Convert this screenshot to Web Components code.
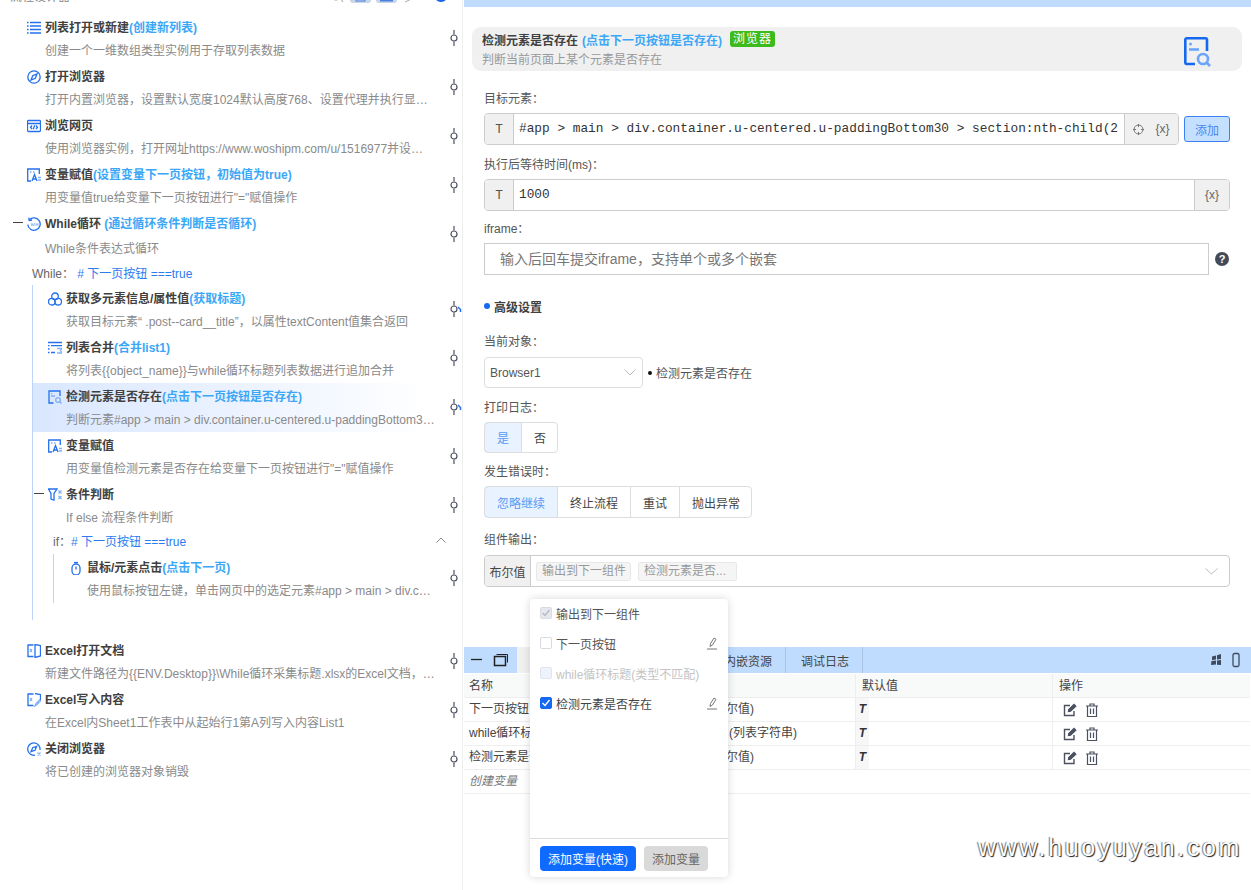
<!DOCTYPE html>
<html lang="zh">
<head>
<meta charset="utf-8">
<title>流程设计器</title>
<style>
    html, body { margin: 0; height: 100%; }
    body { font: 12px "Liberation Sans", "Noto Sans CJK SC", sans-serif; color: #444; background: #fff; overflow: hidden; }
</style>
</head>
<body>
<app-shell>
    <flow-panel slot="left">
        <flow-step icon="list" title="列表打开或新建" note="(创建新列表)" desc="创建一个一维数组类型实例用于存取列表数据"></flow-step>
        <flow-step icon="compass" title="打开浏览器" desc="打开内置浏览器，设置默认宽度1024默认高度768、设置代理并执行显示浏览器窗口操作"></flow-step>
        <flow-step icon="web" title="浏览网页" desc="使用浏览器实例，打开网址https://www.woshipm.com/u/1516977并设置页面加载超时时间"></flow-step>
        <flow-step icon="assign" title="变量赋值" note="(设置变量下一页按钮，初始值为true)" desc="用变量值true给变量下一页按钮进行&quot;=&quot;赋值操作"></flow-step>
        <flow-step icon="loop" fold loose title="While循环" note=" (通过循环条件判断是否循环)" desc="While条件表达式循环"></flow-step>
        <flow-group label="While： " cond="# 下一页按钮 ===true" row="25" style="margin-bottom:17px">
            <flow-step icon="multi" branch title="获取多元素信息/属性值" note="(获取标题)" desc="获取目标元素“ .post--card__title”，以属性textContent值集合返回"></flow-step>
            <flow-step icon="merge" title="列表合并" note="(合并list1)" desc="将列表{{object_name}}与while循环标题列表数据进行追加合并"></flow-step>
            <flow-step icon="detect" branch selected title="检测元素是否存在" note="(点击下一页按钮是否存在)" desc="判断元素#app > main > div.container.u-centered.u-paddingBottom30 > section:nth-child(2)是否存在"></flow-step>
            <flow-step icon="assign" title="变量赋值" desc="用变量值检测元素是否存在给变量下一页按钮进行&quot;=&quot;赋值操作"></flow-step>
            <flow-step icon="cond" fold title="条件判断" desc="If else 流程条件判断"></flow-step>
            <flow-group label="if：" cond="# 下一页按钮 ===true" row="24" chevron>
                <flow-step icon="mouse" title="鼠标/元素点击" note="(点击下一页)" desc="使用鼠标按钮左键，单击网页中的选定元素#app > main > div.container.u-centered.u-paddingBottom30"></flow-step>
            </flow-group>
        </flow-group>
        <flow-step icon="xlsopen" title="Excel打开文档" desc="新建文件路径为{{ENV.Desktop}}\While循环采集标题.xlsx的Excel文档，并保存Excel对象到变量ExcelObject"></flow-step>
        <flow-step icon="xlswrite" title="Excel写入内容" desc="在Excel内Sheet1工作表中从起始行1第A列写入内容List1"></flow-step>
        <flow-step icon="closeweb" title="关闭浏览器" desc="将已创建的浏览器对象销毁"></flow-step>
    </flow-panel>

    <detail-panel slot="right">
        <step-card title="检测元素是否存在" note="(点击下一页按钮是否存在)" tag="浏览器" desc="判断当前页面上某个元素是否存在"></step-card>

        <form-field label="目标元素：" style="margin-top:17px">
            <div style="display:flex;align-items:flex-start;gap:5px">
                <text-group value="#app > main > div.container.u-centered.u-paddingBottom30 > section:nth-child(2)" target style="flex:1;min-width:0"></text-group>
                <add-button>添加</add-button>
            </div>
        </form-field>
        <form-field label="执行后等待时间(ms)：" style="margin-top:9px">
            <text-group value="1000"></text-group>
        </form-field>
        <form-field label="iframe：" style="margin-top:7px">
            <plain-input placeholder="输入后回车提交iframe，支持单个或多个嵌套"></plain-input>
        </form-field>

        <section-title style="margin-top:21px">高级设置</section-title>

        <form-field label="当前对象：" style="margin-top:15px" tight>
            <object-select value="Browser1" hint="检测元素是否存在"></object-select>
        </form-field>
        <form-field label="打印日志：" style="margin-top:9px">
            <seg-buttons items="是,否" h="31"></seg-buttons>
        </form-field>
        <form-field label="发生错误时：" style="margin-top:8px">
            <seg-buttons items="忽略继续,终止流程,重试,抛出异常" h="32"></seg-buttons>
        </form-field>
        <form-field label="组件输出：" style="margin-top:11px" tight>
            <output-group type="布尔值" tags="输出到下一组件,检测元素是否..."></output-group>
        </form-field>

        <var-dock slot="dock">
            <var-row head name="名称" default-value="默认值" ops="操作"></var-row>
            <var-row name="下一页按钮" type="(布尔值)" pad="96"></var-row>
            <var-row name="while循环标题" type="(列表字符串)" pad="115"></var-row>
            <var-row name="检测元素是否存在" type="(布尔值)" pad="96"></var-row>
            <var-row create name="创建变量"></var-row>
        </var-dock>
    </detail-panel>

    <var-popup slot="over">
        <var-option state="locked" label="输出到下一组件"></var-option>
        <var-option state="off" label="下一页按钮" pen></var-option>
        <var-option state="disabled" label="while循环标题(类型不匹配)"></var-option>
        <var-option state="on" label="检测元素是否存在" pen></var-option>
    </var-popup>

    <water-mark slot="over">www.huoyuyan.com</water-mark>
</app-shell>

<script>
"use strict";
const AZUL = "#2470ee";
const ICONOS = {
    list: `<path stroke-width="1.500" d="M0 1.500h1.600M3 1.500h11M0 5h1.600M3 5h11M0 8.500h1.600M3 8.500h11M0 12h1.600M3 12h11"/>`,
    compass: `<circle cx="7" cy="7" r="6.200"/><path d="M10 4 8.300 8.300 4 10 5.700 5.700Z"/>`,
    web: `<rect x=".5" y="1.500" width="13" height="11" rx="1"/><path d="M.5 4.500h13M5 6.500 3.500 8.200 5 10M9 6.500l1.500 1.700L9 10M7.700 6.300 6.300 10.300"/>`,
    assign: `<path d="M4 13H.7V1h11.600v5"/><path d="M3 4h1.500M6 4h1.500" stroke="#7fb0fa"/><path d="M5 13l2.500-6.500L10 13M6 11h3" /><path d="M11 9.500h3M11 12h3" stroke="#7fb0fa"/>`,
    loop: `<path d="M2.300 3A6.200 6.200 0 1 1 .8 7.500"/><path d="M1.800.6 2.200 3.400 5 3"/><path d="M4 6l.8 3 1-2.400 1 2.400.8-3M9 6v3M11 6v3M9 7.500h2" stroke="#8ab6fa" stroke-width=".8"/>`,
    multi: `<circle cx="7" cy="4.300" r="3.300"/><circle cx="3.800" cy="9.700" r="3.300"/><circle cx="10.200" cy="9.700" r="3.300"/>`,
    merge: `<path d="M0 1.500h14M0 4.700h1.500M3 4.700h11M0 8h1.500M0 11.500h1.500M3 11.500h4"/><path d="M9 7.500h5l-1.500 2 1.500 2.500H9" stroke="#7fb0fa"/>`,
    detect: `<path d="M5.500 13H1V1h11v5"/><path d="M3 3.700h1.200M3 6h4" stroke="#7fb0fa"/><circle cx="10" cy="10" r="2.300" stroke="#7fb0fa"/><path d="M11.800 11.800 13.500 13.500" stroke="#7fb0fa"/>`,
    cond: `<path d="M.5 1h8.500L6 5.500V12l-3-1V5.500Z"/><path d="M10.500 2.500l3 3M13.500 2.500l-3 3M10.500 8l3 3M13.500 8l-3 3" stroke="#7fb0fa"/>`,
    mouse: `<rect x="3" y="3" width="8" height="11" rx="4"/><path d="M7 5.500v3"/><path d="M5 1.500h4"/>`,
    xlsopen: `<path d="M6.500 1H1v11.500h5.500M8 .5l5.500 1V12L8 13.500Z"/><path d="M3 5l2 3M5 5 3 8" stroke="#7fb0fa"/>`,
    xlswrite: `<path d="M6.500 1H1v11.500h5.500M8 .5l5.500 1V7"/><path d="M3 5l2 3M5 5 3 8" stroke="#7fb0fa"/><path d="M8 13l1-2.500L12.500 7l1 1-3.500 3.500Z" stroke="#7fb0fa"/>`,
    closeweb: `<path d="M13 8A6.200 6.200 0 1 0 8 13.200"/><path d="M9.700 4.300 8 8.300 4 9.700 5.700 5.700Z"/><path d="M10.500 10.500l3 3M13.500 10.500l-3 3" stroke="#7fb0fa"/>`
};

class AppShell extends HTMLElement {
    constructor() {
        super();
        this.shadow = this.attachShadow({ mode: "open" });
        this.shadow.innerHTML = `
        <style>
            :host { display: grid; grid-template-columns: 463px 1fr; width: 1251px; height: 890px; position: relative; overflow: hidden; }
        </style>
        <slot name="left"></slot>
        <slot name="right"></slot>
        <slot name="over"></slot>`;
    }
}

class FlowPanel extends HTMLElement {
    constructor() {
        super();
        this.shadow = this.attachShadow({ mode: "open" });
        this.shadow.innerHTML = `
        <style>
            :host { display: block; height: 890px; overflow: hidden; border-right: 1px solid #eee; box-sizing: border-box; }
            #tope { height: 14px; display: flow-root; }
            #barra { height: 16px; margin-top: -11px; padding: 0 14px 0 10px; display: flex; align-items: center; color: #888; line-height: 16px; }
            #barra span { flex: 1; }
            #barra svg { flex: none; display: block; align-self: flex-start; margin-top: -2px; }
            #pasos { padding-left: 12px; }
        </style>
        <div id="tope"><div id="barra">
            <span>流程设计器</span>
            <svg width="118" height="16" viewBox="0 0 118 16" fill="none">
                <circle cx="6" cy="7" r="6" stroke="#999"/><path d="M10 11l3 4" stroke="#999"/>
                <rect x="20" y="0" width="21" height="16" rx="3" fill="#c9d6e6"/><rect x="26" y="2" width="9" height="12" fill="none" stroke="#4a7fe0"/>
                <rect x="46" y="0" width="21" height="16" rx="3" fill="#c9d6e6"/><path d="M50 13h13" stroke="#4a7fe0" stroke-width="3"/>
                <path d="M75 15 88 9M77 4h9v8" stroke="#aaa"/>
                <circle cx="111" cy="8" r="7" fill="#1763f0"/>
            </svg>
        </div></div>
        <div id="pasos"><slot></slot></div>`;
    }
}

class FlowStep extends HTMLElement {
    constructor() {
        super();
        this.shadow = this.attachShadow({ mode: "open" });
    }
    connectedCallback() {
        const icon = ICONOS[this.getAttribute("icon")] || "";
        const title = this.getAttribute("title") || "";
        this.removeAttribute("title");
        const note = this.getAttribute("note");
        const desc = this.getAttribute("desc") || "";
        const sel = this.hasAttribute("selected");
        this.shadow.innerHTML = `
        <style>
            :host { display: flex; height: 49px; position: relative; box-sizing: border-box; padding-top: 2px; }
            :host([loose]) { height: 50px; }
            :host([loose]) #desc { line-height: 26px; height: 24px; }
            #fondo { flex: 1; min-width: 0; padding: 0 11px 0 15px; ${sel ? "background: linear-gradient(90deg,#d9e7ff,#eef4ff 55%,#fff 96%);margin-top:-2px;padding-top:2px;" : ""} }
            #fila { display: flex; align-items: center; height: 24px; line-height: 24px; white-space: pre; }
            #fila svg { flex: none; width: 14px; height: 14px; margin-right: 4px; fill: none; stroke: ${AZUL}; stroke-width: 1.300; }
            b { font-weight: 700; color: #404040; }
            i { font-style: normal; font-weight: 700; color: #3ba7f6; }
            #desc { height: 23px; line-height: 23px; padding-left: 18px; color: #8a8a8a; white-space: nowrap; overflow: hidden; text-overflow: ellipsis; }
            #pin { flex: none; width: 16px; display: flex; align-items: center; justify-content: flex-end; margin-top: -4px; }
            #menos { position: absolute; left: 1px; top: 12px; width: 10px; height: 1px; background: #444; }
        </style>
        ${this.hasAttribute("fold") ? `<div id="menos"></div>` : ""}
        <div id="fondo">
            <div id="fila"><svg viewBox="0 0 14 14">${icon}</svg><b>${title}</b>${note ? `<i>${note}</i>` : ""}</div>
            <div id="desc"></div>
        </div>
        <div id="pin"><svg width="12" height="16" viewBox="0 0 12 16" fill="none" stroke="#4b5060" stroke-width="1.200">
            <path d="M4 0v4.500M4 11.500V16"/><circle cx="4" cy="8" r="3"/>
            ${this.hasAttribute("branch") ? `<path d="M8 6l2.500 2.500V11" stroke="#2470ee" stroke-width="1.500"/>` : ""}
        </svg></div>`;
        this.shadow.getElementById("desc").textContent = desc;
    }
}

class FlowGroup extends HTMLElement {
    constructor() {
        super();
        this.shadow = this.attachShadow({ mode: "open" });
    }
    connectedCallback() {
        const row = this.getAttribute("row") || 24;
        this.shadow.innerHTML = `
        <style>
            :host { display: block; margin-left: 20px; }
            #cab { height: ${row}px; box-sizing: border-box; display: flex; align-items: center; white-space: pre; color: #666; padding-right: 16px; }
            #cab em { font-style: normal; color: #2c7cf0; flex: 1; }
            #cuerpo { border-left: 1px solid #bcd3fb; }
            :host([row="25"]) #cuerpo { padding-bottom: 17px; }
            :host([row="24"]) #cab { padding-bottom: 4px; }
        </style>
        <div id="cab"><span>${this.getAttribute("label")}</span><em>${this.getAttribute("cond")}</em>
        ${this.hasAttribute("chevron") ? `<svg width="10" height="6" viewBox="0 0 10 6" fill="none" stroke="#888"><path d="M.5 5.500 5 1l4.500 4.500"/></svg>` : ""}</div>
        <div id="cuerpo"><slot></slot></div>`;
    }
}

class DetailPanel extends HTMLElement {
    constructor() {
        super();
        this.shadow = this.attachShadow({ mode: "open" });
        this.shadow.innerHTML = `
        <style>
            :host { display: flex; flex-direction: column; height: 890px; padding-left: 1px; box-sizing: border-box; min-width: 0; }
            #tope { height: 7px; background: #bfdcff; flex: none; }
            #forma { flex: 1; min-height: 0; padding: 0 21px 0 20px; }
            #dock { flex: none; height: 243px; }
        </style>
        <div id="tope"></div>
        <div id="forma"><slot></slot></div>
        <div id="dock"><slot name="dock"></slot></div>`;
    }
}

class StepCard extends HTMLElement {
    constructor() {
        super();
        this.shadow = this.attachShadow({ mode: "open" });
    }
    connectedCallback() {
        const title = this.getAttribute("title");
        this.removeAttribute("title");
        this.shadow.innerHTML = `
        <style>
            :host { display: flex; align-items: center; height: 44px; margin: 20px -12px 0 -12px; padding: 0 30px 0 10px; background: #f0f0f0; border-radius: 9px; }
            #txt { flex: 1; }
            #uno { display: flex; align-items: center; height: 20px; }
            b { color: #404040; }
            i { font-style: normal; font-weight: 700; color: #3ba7f6; margin-left: 4px; }
            span { margin-left: 8px; background: #3dba1c; color: #fff; padding: 0 3px; height: 16px; line-height: 16px; border-radius: 3px; letter-spacing: 1px; }
            p { margin: 2px 0 0; color: #999; line-height: 18px; }
            svg { flex: none; margin-top: 6px; }
        </style>
        <div id="txt">
            <div id="uno"><b>${title}</b><i>${this.getAttribute("note")}</i><span>${this.getAttribute("tag")}</span></div>
            <p>${this.getAttribute("desc")}</p>
        </div>
        <svg width="28" height="30" viewBox="0 0 28 30" fill="none" stroke-width="2.600">
            <path d="M11 27H2.500A1.500 1.500 0 0 1 1.300 25.500V2.500A1.500 1.500 0 0 1 2.500 1.300h19A1.500 1.500 0 0 1 23 2.500V14" stroke="#1668f0"/>
            <circle cx="6.500" cy="7" r="1.500" fill="#6aa5fb" stroke="none"/>
            <path d="M5 12.500h10" stroke="#6aa5fb"/>
            <circle cx="19" cy="22" r="5" stroke="#6aa5fb"/><path d="M23 26l3 3" stroke="#6aa5fb"/>
        </svg>`;
    }
}

class FormField extends HTMLElement {
    constructor() {
        super();
        this.shadow = this.attachShadow({ mode: "open" });
    }
    connectedCallback() {
        this.shadow.innerHTML = `
        <style>
            :host { display: block; }
            #lab { height: 20px; line-height: 22px; color: #555; margin-bottom: ${this.hasAttribute("tight") ? 6 : 5}px; }
        </style>
        <div id="lab">${this.getAttribute("label")}</div>
        <slot></slot>`;
    }
}

class TextGroup extends HTMLElement {
    constructor() {
        super();
        this.shadow = this.attachShadow({ mode: "open" });
    }
    connectedCallback() {
        const target = this.hasAttribute("target");
        this.shadow.innerHTML = `
        <style>
            :host { display: flex; height: 32px; border: 1px solid #ccc; border-radius: 4px; box-sizing: border-box; overflow: hidden; align-items: stretch; }
            #t { flex: none; width: 28px; background: #f0f0f0; border-right: 1px solid #ccc; display: flex; align-items: center; justify-content: center; color: #555; font: 12.800px "Liberation Mono", monospace; }
            #v { flex: 1; min-width: 0; margin: 0 5px; white-space: nowrap; overflow: hidden; font: 12.800px/30px "Liberation Mono", monospace; color: #333; }
            #s { flex: none; width: ${target ? 53 : 34}px; background: #f0f0f0; border-left: 1px solid #ccc; display: flex; align-items: center; justify-content: center; gap: 11px; color: #666; font-size: 12px; }
            svg { display: block; }
        </style>
        <div id="t">T</div>
        <div id="v"></div>
        <div id="s">
            ${target ? `<svg width="11" height="11" viewBox="0 0 11 11" fill="none" stroke="#777"><circle cx="5.500" cy="5.500" r="4.500"/><path d="M5.500 0v3M5.500 8v3M0 5.500h3M8 5.500h3"/></svg>` : ""}
            <span>{x}</span>
        </div>`;
        this.shadow.getElementById("v").textContent = this.getAttribute("value");
    }
}

class AddButton extends HTMLElement {
    constructor() {
        super();
        this.shadow = this.attachShadow({ mode: "open" });
        this.shadow.innerHTML = `
        <style>
            :host { display: flex; flex: none; align-items: center; justify-content: center; box-sizing: border-box; width: 46px; height: 26px; margin-top: 3px; background: #c5e0ff; border: 1px solid #3b82f6; border-radius: 3px; color: #4d86ee; }
        </style>
        <slot></slot>`;
    }
}

class PlainInput extends HTMLElement {
    constructor() {
        super();
        this.shadow = this.attachShadow({ mode: "open" });
    }
    connectedCallback() {
        this.shadow.innerHTML = `
        <style>
            :host { display: flex; align-items: center; }
            #c { flex: none; box-sizing: border-box; width: 725px; height: 32px; border: 1px solid #ccc; padding-left: 15px; line-height: 30px; font-size: 14px; color: #777; }
            #q { flex: none; width: 14px; height: 14px; margin-left: 6px; border-radius: 50%; background: #434a58; color: #fff; font-weight: 700; font-size: 11px; line-height: 14px; text-align: center; }
        </style>
        <div id="c">${this.getAttribute("placeholder")}</div>
        <div id="q">?</div>`;
    }
}

class SectionTitle extends HTMLElement {
    constructor() {
        super();
        this.shadow = this.attachShadow({ mode: "open" });
        this.shadow.innerHTML = `
        <style>
            :host { display: flex; align-items: center; gap: 4px; height: 20px; font-weight: 700; color: #404040; }
            i { width: 6px; height: 6px; border-radius: 50%; background: #1668f0; }
        </style>
        <i></i><slot></slot>`;
    }
}

class ObjectSelect extends HTMLElement {
    constructor() {
        super();
        this.shadow = this.attachShadow({ mode: "open" });
    }
    connectedCallback() {
        this.shadow.innerHTML = `
        <style>
            :host { display: flex; align-items: center; height: 31px; color: #555; }
            #c { box-sizing: border-box; width: 159px; height: 31px; border: 1px solid #ddd; border-radius: 4px; padding: 0 6px 0 5px; display: flex; align-items: center; justify-content: space-between; }
            i { width: 4px; height: 4px; border-radius: 50%; background: #111; margin: 0 4px 0 5px; }
        </style>
        <div id="c"><span>${this.getAttribute("value")}</span>
            <svg width="12" height="7" viewBox="0 0 12 7" fill="none" stroke="#bbb"><path d="M.5.500 6 6 11.500.500"/></svg></div>
        <i></i><span>${this.getAttribute("hint")}</span>`;
    }
}

class SegButtons extends HTMLElement {
    constructor() {
        super();
        this.shadow = this.attachShadow({ mode: "open" });
    }
    connectedCallback() {
        const items = this.getAttribute("items").split(",");
        this.shadow.innerHTML = `
        <style>
            :host { display: inline-flex; height: ${this.getAttribute("h")}px; border: 1px solid #ddd; border-radius: 4px; box-sizing: border-box; overflow: hidden; vertical-align: top; }
            span { display: flex; align-items: center; padding: 0 12px; border-left: 1px solid #ddd; color: #444; }
            span:first-of-type { border-left: 0; background: #e9f2ff; color: #5a9bf5; box-shadow: 0 0 0 1px #6aa5fb; }
            span:last-of-type { padding-right: 11px; }
        </style>
        ${items.map(t => `<span>${t}</span>`).join("")}`;
    }
}

class OutputGroup extends HTMLElement {
    constructor() {
        super();
        this.shadow = this.attachShadow({ mode: "open" });
    }
    connectedCallback() {
        const tags = this.getAttribute("tags").split(",");
        this.shadow.innerHTML = `
        <style>
            :host { display: flex; align-items: center; height: 32px; border: 1px solid #ccc; border-radius: 4px; box-sizing: border-box; overflow: hidden; padding-right: 11px; }
            #p { align-self: stretch; width: 45px; flex: none; background: #f0f0f0; border-right: 1px solid #ccc; display: flex; align-items: center; justify-content: center; color: #444; margin-right: 5px; }
            span { height: 19px; line-height: 19px; padding: 0 5px 0 6px; margin: 0 7px 0 0; background: #f5f5f5; box-shadow: inset 0 0 0 1px #e8e8e8; border-radius: 3px; color: #999; }
            span:last-of-type { padding-right: 11px; }
            svg { margin-left: auto; }
        </style>
        <div id="p">${this.getAttribute("type")}</div>
        ${tags.map(t => `<span>${t}</span>`).join("")}
        <svg width="13" height="7" viewBox="0 0 13 7" fill="none" stroke="#bbb"><path d="M.5.500 6.500 6l6-5.500"/></svg>`;
    }
}

class VarDock extends HTMLElement {
    constructor() {
        super();
        this.shadow = this.attachShadow({ mode: "open" });
        this.shadow.innerHTML = `
        <style>
            :host { display: block; height: 243px; }
            #bar { height: 26px; background: #bfdcff; display: flex; align-items: center; color: #444; }
            #ctl { width: 53px; flex: none; display: block; }
            #tabvacio { width: 192px; align-self: stretch; background: #f0f0f0; flex: none; }
            .tab { align-self: stretch; display: flex; align-items: center; padding: 0 13px 0 15px; border-right: 1px solid #a9c4e6; }
            #der { margin-left: auto; margin-right: 8px; display: block; }
            #tabla { margin-top: 1px; width: 786px; }
        </style>
        <div id="bar">
            <svg id="ctl" height="26" viewBox="0 0 53 26" fill="none" stroke="#222">
                <path d="M7 12.500h11" stroke-width="1.300"/>
                <rect x="30.500" y="9.500" width="11" height="9" stroke-width="1.500"/><path d="M32.500 7.500h11v8" />
            </svg>
            <div id="tabvacio"></div>
            <div class="tab">内嵌资源</div>
            <div class="tab">调试日志</div>
            <svg id="der" width="34" height="16" viewBox="0 0 34 16">
                <path d="M3 4.500 7 3.500v4L3 8ZM8 3.300 12 2v5l-4 .5ZM2.500 9 7 8.500v4L2 13ZM8 8.500l4-.5v5L8 12.800Z" fill="#3e4a5c"/>
                <rect x="24" y="1.500" width="6" height="13" rx="1.500" fill="none" stroke="#3e4a5c" stroke-width="1.300"/>
            </svg>
        </div>
        <div id="tabla"><slot></slot></div>`;
    }
}

class VarRow extends HTMLElement {
    constructor() {
        super();
        this.shadow = this.attachShadow({ mode: "open" });
    }
    connectedCallback() {
        const head = this.hasAttribute("head");
        const create = this.hasAttribute("create");
        const pad = this.getAttribute("pad") || 0;
        let resto;
        if (head) {
            resto = `<div></div><div class="c">${this.getAttribute("default-value")}</div><div class="c">${this.getAttribute("ops")}</div>`;
        } else if (create) {
            resto = "";
        } else {
            resto = `<div style="padding-left:${pad}px">${this.getAttribute("type")}</div>
            <div class="c d"><u>T</u></div>
            <div class="c o">
                <svg width="14" height="14" viewBox="0 0 14 14" fill="none" stroke="#4b5060" stroke-width="1.400"><path d="M11 8v4.500H1.500V2.500H7"/><path d="M5.500 8.500 5.800 6.500 11 1.500l1.700 1.700L7.500 8.200Z" fill="#4b5060"/></svg>
                <svg width="14" height="14" viewBox="0 0 14 14" fill="none" stroke="#4b5060" stroke-width="1.200"><path d="M1 3h12M5 3V1h4v2M2.500 3v10.500h9V3M5.500 5.500v5.500M8.500 5.500v5.500"/></svg>
            </div>`;
        }
        this.shadow.innerHTML = `
        <style>
            :host { display: grid; grid-template-columns: 150px 241px 197px 198px; height: 24px; box-sizing: border-box; border-bottom: 1px solid #eee; line-height: ${head ? 25 : 23}px; color: #444; ${head ? "background:#f8f9f9;" : ""} }
            #n { padding-left: 5px; white-space: nowrap; overflow: hidden; ${create ? "font-style:italic;color:#777;" : ""} }
            .c { border-left: 1px solid #eee; padding-left: 6px; }
            .d { padding: 0; }
            .d u { display: block; width: 13px; height: 23px; background: #f7f7f7; text-align: center; font: italic 700 12px/23px "Liberation Sans", sans-serif; text-decoration: none; color: #333; }
            .o { display: flex; align-items: center; gap: 8px; padding-left: 10px; }
        </style>
        <div id="n">${this.getAttribute("name")}</div>${resto}`;
    }
}

class VarPopup extends HTMLElement {
    constructor() {
        super();
        this.shadow = this.attachShadow({ mode: "open" });
        this.shadow.innerHTML = `
        <style>
            :host { position: absolute; left: 530px; top: 599px; width: 198px; height: 278px; background: #fff; border-radius: 4px; box-shadow: 0 0 8px rgba(0,0,0,.16); display: flex; flex-direction: column; }
            #lista { flex: 1; margin-top: -1px; }
            #pie { height: 38px; flex: none; border-top: 1px solid #ddd; display: flex; align-items: center; gap: 8px; padding-left: 10px; }
            button { font: inherit; border: 0; height: 25px; border-radius: 4px; padding: 0; }
            #a { width: 96px; background: #0f6bff; color: #fff; }
            #b { width: 64px; background: #d9d9d9; color: #666; }
        </style>
        <div id="lista"><slot></slot></div>
        <div id="pie"><button id="a">添加变量(快速)</button><button id="b">添加变量</button></div>`;
    }
}

class VarOption extends HTMLElement {
    constructor() {
        super();
        this.shadow = this.attachShadow({ mode: "open" });
    }
    connectedCallback() {
        const state = this.getAttribute("state");
        const colores = {
            locked: ["#e6e8ee", "#d8dbe3", "#b5b9c2", "#555"],
            off: ["#fff", "#d8dbe3", "", "#555"],
            disabled: ["#eef2fb", "#dfe4f0", "", "#c4c4c4"],
            on: ["#1668f0", "#1668f0", "#fff", "#444"]
        }[state];
        this.shadow.innerHTML = `
        <style>
            :host { display: flex; align-items: center; height: 30px; padding: 0 10px; color: ${colores[3]}; }
            #box { flex: none; width: 12px; height: 12px; box-sizing: border-box; border: 1px solid ${colores[1]}; border-radius: 2px; background: ${colores[0]}; margin-right: 4px; }
            #box svg { display: block; }
            span { flex: 1; white-space: nowrap; }
        </style>
        <div id="box">${colores[2] ? `<svg width="10" height="10" viewBox="0 0 10 10" fill="none" stroke="${colores[2]}" stroke-width="1.300"><path d="M1.500 5 4 7.500 8.500 2"/></svg>` : ""}</div>
        <span>${this.getAttribute("label")}</span>
        ${this.hasAttribute("pen") ? `<svg width="12" height="13" viewBox="0 0 12 13" fill="none" stroke="#777"><path d="M4 9.500 4.500 6.500 8 1l2 1.300L6.500 8ZM1 12h10"/></svg>` : ""}`;
    }
}

class WaterMark extends HTMLElement {
    constructor() {
        super();
        this.shadow = this.attachShadow({ mode: "open" });
        this.shadow.innerHTML = `
        <style>
            :host { position: absolute; left: 978px; top: 832px; font-size: 25px; line-height: 30px; letter-spacing: 2.600px; color: #fff; text-shadow: 1px 1px 1px #222, -1px 0 1px #777; white-space: nowrap; }
        </style>
        <slot></slot>`;
    }
}

customElements.define("app-shell", AppShell);
customElements.define("flow-panel", FlowPanel);
customElements.define("flow-step", FlowStep);
customElements.define("flow-group", FlowGroup);
customElements.define("detail-panel", DetailPanel);
customElements.define("step-card", StepCard);
customElements.define("form-field", FormField);
customElements.define("text-group", TextGroup);
customElements.define("add-button", AddButton);
customElements.define("plain-input", PlainInput);
customElements.define("section-title", SectionTitle);
customElements.define("object-select", ObjectSelect);
customElements.define("seg-buttons", SegButtons);
customElements.define("output-group", OutputGroup);
customElements.define("var-dock", VarDock);
customElements.define("var-row", VarRow);
customElements.define("var-popup", VarPopup);
customElements.define("var-option", VarOption);
customElements.define("water-mark", WaterMark);
</script>
</body>
</html>
